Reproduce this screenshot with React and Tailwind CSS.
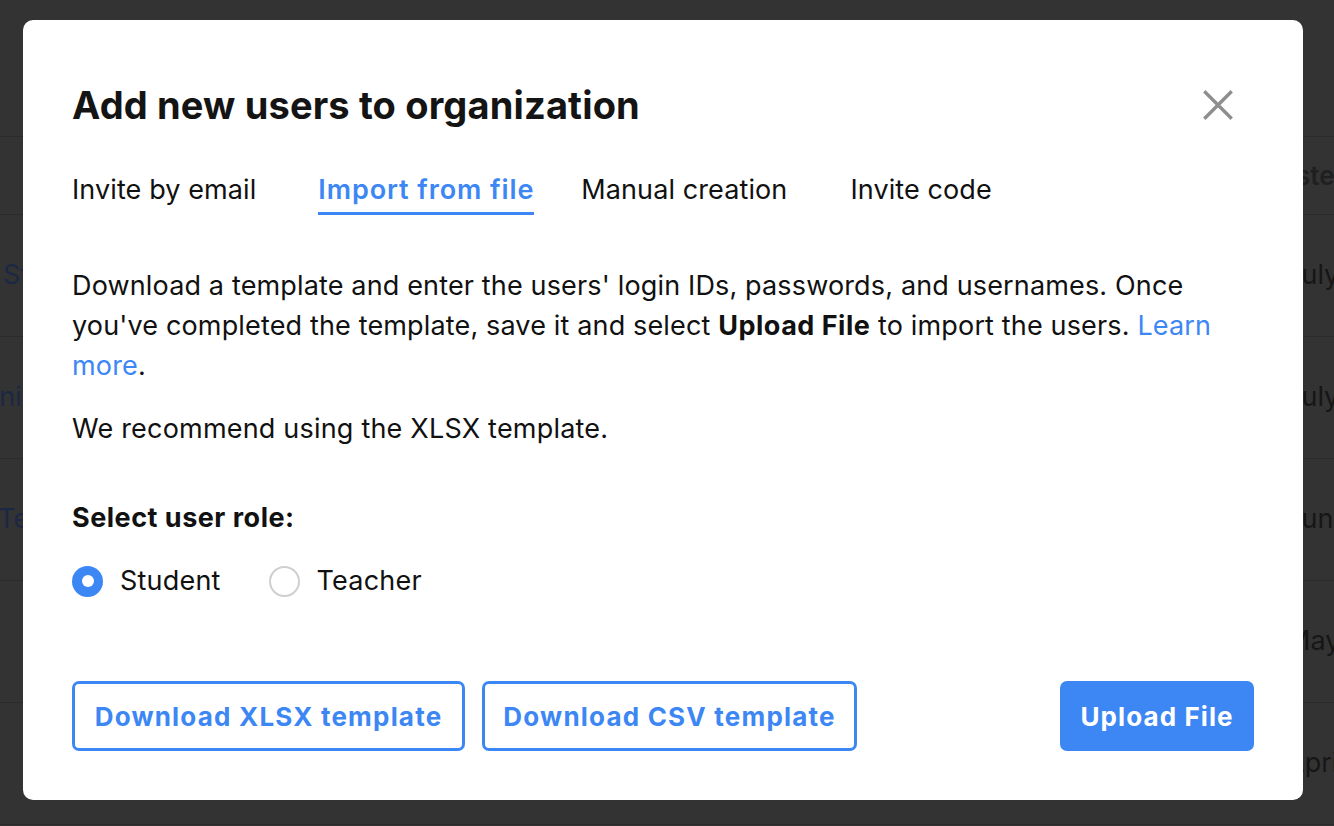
import React from "react";

const font = { fontFamily: "Inter, 'Noto Sans', 'Liberation Sans', sans-serif" };

const rows = [
  { name: "Student One", date: "July 12, 2023" },
  { name: "Admini Two", date: "July 3, 2023" },
  { name: "Teacher Lee", date: "June 28, 2023" },
  { name: "Sam Park", date: "May 14, 2023" },
  { name: "Ana Diaz", date: "April 2, 2023" },
];

function BackgroundTable() {
  return (
    <div className="w-full h-full bg-[#333333] overflow-hidden">
      <div className="h-[137px] border-b border-[#2b2b2b]" />
      <div className="h-[78px] border-b border-[#2b2b2b] flex items-center">
        <div className="flex-1" />
        <div className="w-[93px] shrink-0 whitespace-nowrap text-[26px] font-semibold text-[#1f1f1f]">
          Registered
        </div>
      </div>
      {rows.map((r, i) => (
        <div
          key={i}
          className="h-[122px] border-b border-[#2b2b2b] flex items-center justify-between"
        >
          <div
            className={
              "text-[27px] text-[#1b2844] " +
              (i === 1 ? "-ml-[66px]" : i === 0 ? "ml-[3px]" : "-ml-[2px]")
            }
          >
            {i < 3 ? r.name : ""}
          </div>
          <div className="text-[27px] text-[#161616] w-[48px] whitespace-nowrap">
            {r.date}
          </div>
        </div>
      ))}
    </div>
  );
}

function Radio({ checked, label }) {
  return (
    <label className="flex items-center gap-[17px]">
      {checked ? (
        <span className="w-[31px] h-[31px] rounded-full bg-[#3d87f5] flex items-center justify-center">
          <span className="w-[12px] h-[12px] rounded-full bg-white" />
        </span>
      ) : (
        <span className="w-[31px] h-[31px] rounded-full border-2 border-[#cfcfcf] bg-white" />
      )}
      <span className="text-[27px] tracking-[0.2px] text-[#111111] leading-[40px]">{label}</span>
    </label>
  );
}

export default function App() {
  return (
    <div className="relative w-[1334px] h-[826px] overflow-hidden" style={font}>
      <BackgroundTable />

      <div className="absolute left-[23px] top-[20px] w-[1280px] h-[780px] bg-white rounded-[10px] px-[49px] pt-[63px] pb-[49px] flex flex-col">
        <div className="flex items-center justify-between">
          <h1 className="text-[38px] leading-[44px] font-bold text-[#141414] tracking-[0.15px]">
            Add new users to organization
          </h1>
          <button className="w-[32px] h-[32px] mr-[20px] flex items-center justify-center">
            <svg width="30" height="30" viewBox="0 0 30 30">
              <path
                d="M2.5 2.5 L27.5 27.5 M27.5 2.5 L2.5 27.5"
                stroke="#8e8e8e"
                strokeWidth="3.4"
                strokeLinecap="square"
              />
            </svg>
          </button>
        </div>

        <div className="flex items-end mt-[47px] text-[27px] leading-[32px] tracking-[0.1px]">
          <div className="pb-[9px] text-[#111111]">Invite by email</div>
          <div className="ml-[62px] pb-[6px] border-b-[3px] border-[#3d87f5] text-[#3d87f5] font-semibold tracking-[0.9px]">
            Import from file
          </div>
          <div className="ml-[47px] pb-[9px] text-[#111111]">Manual creation</div>
          <div className="ml-[63px] pb-[9px] text-[#111111]">Invite code</div>
        </div>

        <p className="mt-[51px] text-[27px] leading-[40px] tracking-[0.15px] text-[#111111]">
          Download a template and enter the users' login IDs, passwords, and usernames. Once
          you've completed the template, save it and select{" "}
          <span className="font-bold tracking-[0.5px]">Upload File</span> to import the users.{" "}
          <span className="text-[#3d87f5]">Learn more</span>.
        </p>
        <p className="mt-[23px] text-[27px] leading-[40px] tracking-[0.2px] text-[#111111]">
          We recommend using the XLSX template.
        </p>

        <div className="mt-[49px] text-[27px] leading-[40px] font-bold tracking-[0.5px] text-[#111111]">
          Select user role:
        </div>
        <div className="mt-[23px] flex items-center gap-[48px]">
          <Radio checked label="Student" />
          <Radio label="Teacher" />
        </div>

        <div className="mt-auto flex items-center">
          <button className="w-[393px] h-[70px] border-[3px] border-[#3d87f5] rounded-[7px] text-[26px] font-bold tracking-[1.2px] text-[#3d87f5] bg-white">
            Download XLSX template
          </button>
          <button className="ml-[17px] w-[375px] h-[70px] border-[3px] border-[#3d87f5] rounded-[7px] text-[26px] font-bold tracking-[1.2px] text-[#3d87f5] bg-white">
            Download CSV template
          </button>
          <div className="flex-1" />
          <button className="w-[194px] h-[70px] rounded-[7px] bg-[#3d87f5] text-[26px] font-bold tracking-[1.1px] text-white">
            Upload File
          </button>
        </div>
      </div>
    </div>
  );
}
